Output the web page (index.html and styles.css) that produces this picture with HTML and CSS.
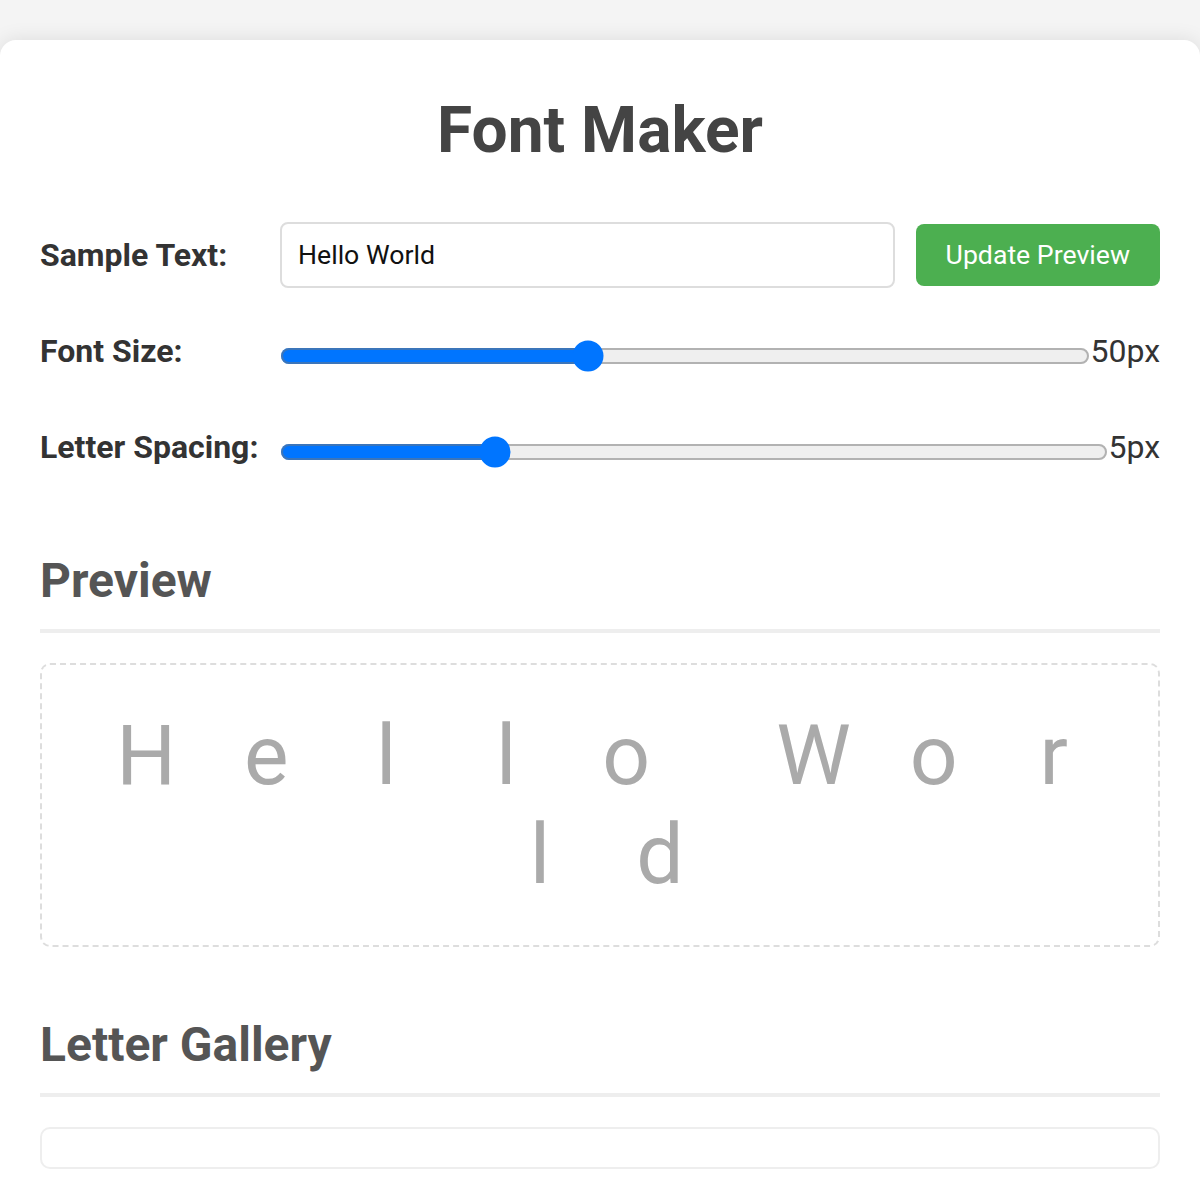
FILE: index.html
```html
<!DOCTYPE html>
<html lang="en">
<head>
<meta charset="utf-8">
<title>Font Maker</title>
<link rel="stylesheet" href="styles.css">
</head>
<body>
<div class="card">
  <h1 class="title">Font Maker</h1>
  <div class="controls">
    <div class="row">
      <label class="label" for="sample">Sample Text:</label>
      <input class="text-input" id="sample" type="text" value="Hello World">
      <button class="btn" type="button">Update Preview</button>
    </div>
    <div class="row">
      <label class="label" for="size">Font Size:</label>
      <input class="range" id="size" type="range" min="20" max="100" value="50">
      <span class="value">50px</span>
    </div>
    <div class="row">
      <label class="label" for="spacing">Letter Spacing:</label>
      <input class="range" id="spacing" type="range" min="0" max="20" value="5">
      <span class="value">5px</span>
    </div>
  </div>

  <section class="section">
    <h2 class="heading">Preview</h2>
    <div class="preview"><span class="glyph">H</span> <span class="glyph">e</span> <span class="glyph">l</span> <span class="glyph">l</span> <span class="glyph">o</span> <span class="glyph space">&nbsp;</span> <span class="glyph">W</span> <span class="glyph">o</span> <span class="glyph">r</span> <span class="glyph">l</span> <span class="glyph">d</span></div>
  </section>

  <section class="section section-gallery">
    <h2 class="heading">Letter Gallery</h2>
    <div class="gallery"></div>
  </section>
</div>
</body>
</html>
```

FILE: styles.css
```css
html, body {
  margin: 0;
  padding: 0;
}

body {
  background: #f4f4f4;
  font-family: Roboto, "Liberation Sans", Arial, sans-serif;
  color: #333;
}

.card {
  max-width: 1200px;
  margin: 40px auto 0;
  padding: 40px;
  box-sizing: border-box;
  background: #fff;
  border-radius: 16px;
  box-shadow: 0 0 20px rgba(0, 0, 0, 0.1);
  min-height: 1300px;
}

.title {
  margin: 13px 0 54px;
  text-align: center;
  font-size: 64px;
  font-weight: 700;
  color: #444;
}

.controls {
  display: flex;
  flex-direction: column;
  gap: 30px;
}

.row {
  display: flex;
  align-items: center;
  height: 66px;
}

.label {
  flex: 0 0 240px;
  font-size: 32px;
  font-weight: 700;
  color: #333;
}

.text-input {
  flex: 1;
  min-width: 0;
  height: 66px;
  box-sizing: border-box;
  padding: 0 16px;
  border: 2px solid #ddd;
  border-radius: 8px;
  font-family: inherit;
  font-size: 26.67px;
  color: #111;
  background: #fff;
}

.btn {
  margin-left: 21px;
  height: 62px;
  padding: 0 30px;
  border: none;
  border-radius: 8px;
  background: #4caf50;
  color: #fff;
  font-family: inherit;
  font-size: 26.67px;
}

.range {
  flex: 1;
  min-width: 0;
  zoom: 2;
  margin: 5px 0 0 0;
}

.value {
  font-size: 32px;
  color: #333;
}

.section {
  margin-top: 72px;
}

.section-gallery {
  margin-top: 69px;
}

.heading {
  margin: 0 0 30px;
  padding-bottom: 20px;
  border-bottom: 4px solid #eee;
  font-size: 48px;
  font-weight: 700;
  color: #555;
}

.preview {
  border: 2px dashed #ddd;
  border-radius: 10px;
  padding: 41px 40px;
  text-align: center;
  font-size: 0;
  color: #aaa;
}

.glyph {
  display: inline-block;
  min-width: 74px;
  margin: 0 23px;
  font-size: 84px;
  text-align: center;
}

.glyph.space {
  min-width: 0;
}

.gallery {
  height: 42px;
  box-sizing: border-box;
  border: 2px solid #eee;
  border-radius: 10px;
}
```
